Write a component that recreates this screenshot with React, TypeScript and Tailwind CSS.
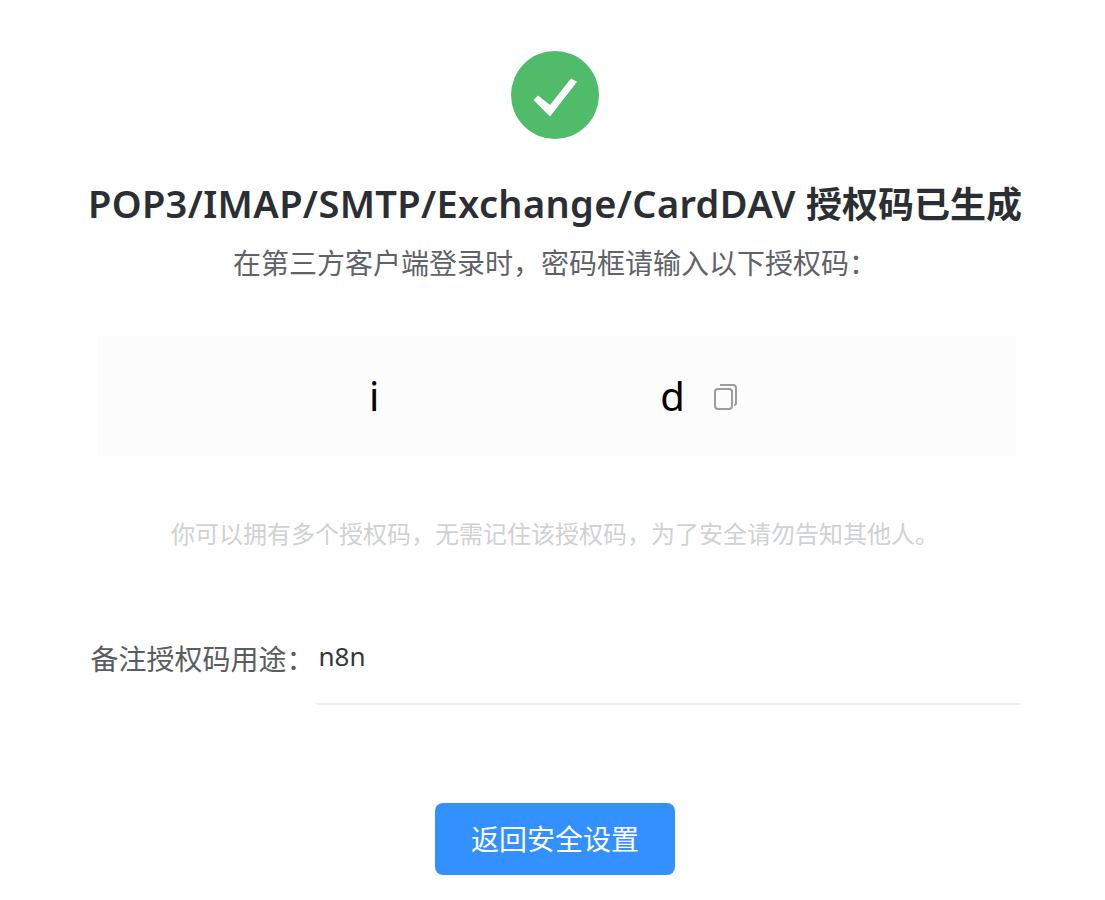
const font = "font-['Noto_Sans','Noto_Sans_CJK_SC',sans-serif]";

export default function App() {
  return (
    <div className={`${font} w-[1105px] h-[900px] bg-white pl-[5px] flex flex-col items-center overflow-hidden`}>
      <div className="mt-[51px] w-[88px] h-[88px] rounded-full bg-[#50bc6a] flex items-center justify-center">
        <svg width="44" height="44" viewBox="0 0 44 44">
          <path d="M0.5 27 L5 22.5 L17 32 L38 5.5 L44 8.7 L17 43.5 Z" fill="#fff" />
        </svg>
      </div>
      <h1 className="mt-[39px] text-[36px] leading-[50px] font-semibold text-[#2b2f33] whitespace-nowrap">
        <span className="text-[38px] tracking-[0.35px]">POP3/IMAP/SMTP/Exchange/CardDAV </span>
        授权码已生成
      </h1>
      <p className="mt-[9px] text-[28px] leading-[48px] text-[#5f6367]">在第三方客户端登录时，密码框请输入以下授权码：</p>
      <div className="mt-[49px] ml-[3px] w-[919px] h-[120px] bg-[#fcfcfc] flex items-center text-[40px] text-black">
        <span className="ml-[272px]">i</span>
        <span className="ml-[281px]">d</span>
        <svg className="ml-[28px]" width="24" height="27" viewBox="0 0 24 27" fill="none" stroke="#9a9c9e" strokeWidth="2">
          <rect x="2" y="6" width="17" height="20" rx="3" />
          <path d="M7 2 H20 a3 3 0 0 1 3 3 V20 a2 2 0 0 1 -2 2" />
        </svg>
      </div>
      <p className="mt-[61px] text-[24px] leading-[34px] text-[#cfd1d3]">你可以拥有多个授权码，无需记住该授权码，为了安全请勿告知其他人。</p>
      <div className="mt-[90px] w-[929px] flex items-start">
        <span className="w-[224px] text-[28px] leading-[36px] text-[#5a5d60]">备注授权码用途：</span>
        <div className="w-[705px] h-[64px] border-b-2 border-[#eceef0] rounded-bl-sm text-[26px] leading-[30px] text-[#33373b] pl-[4px]">n8n</div>
      </div>
      <button className="mt-[98px] w-[240px] h-[72px] rounded-lg bg-[#3391ff] text-white text-[28px]">返回安全设置</button>
    </div>
  );
}
